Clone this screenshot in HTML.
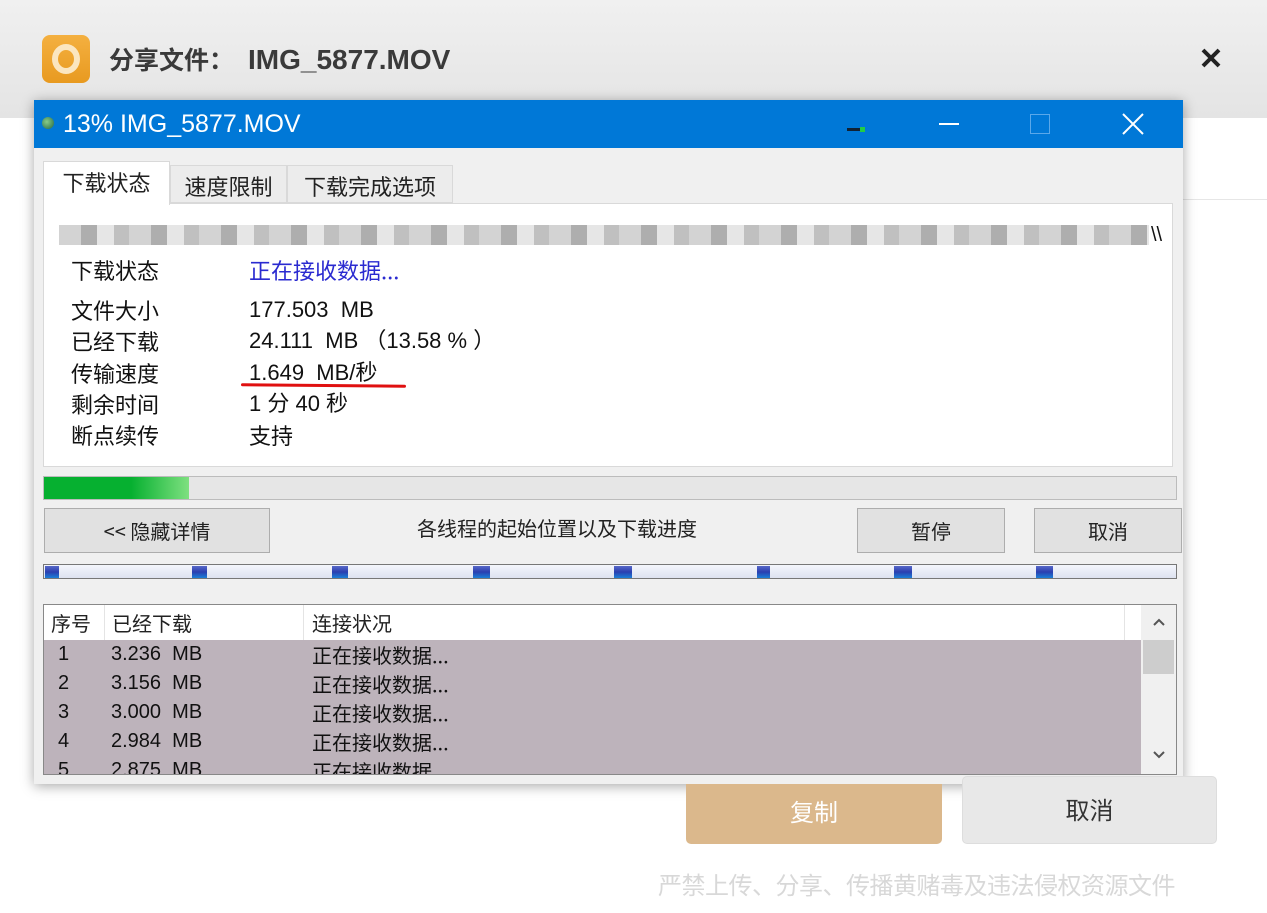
<!DOCTYPE html><html><head><meta charset="utf-8"><style>
*{margin:0;padding:0;box-sizing:border-box}
body{width:1267px;height:913px;background:#fff;position:relative;overflow:hidden;font-family:"Liberation Sans","Noto Sans CJK SC",sans-serif}
.a{position:absolute}
.cj{font-family:"Noto Sans CJK SC","WenQuanYi Zen Hei",sans-serif}
.row{position:absolute;font-size:22px;color:#111;line-height:24px}
.btn{position:absolute;background:#e1e1e1;border:1px solid #adadad;font-size:20px;color:#222;text-align:center}
.mk{position:absolute;top:1px;height:12px;width:16px;background:linear-gradient(#5868c8,#2a3fb0 50%,#1a7fd8)}
.lr{position:absolute;left:0;height:29px;width:1097px;font-size:20px;color:#111;line-height:29px}
</style></head><body>
<div class="a" style="left:0;top:0;width:1267px;height:118px;background:linear-gradient(#f0f0f0,#e4e4e4)"></div>
<div class="a" style="left:1183px;top:199px;width:84px;height:1px;background:#e6e6e6"></div>
<div class="a" style="left:42px;top:35px;width:48px;height:48px;border-radius:8px;background:linear-gradient(#f4b040,#e89a20)"></div>
<div class="a" style="left:52px;top:44px;width:28px;height:30px;border-radius:50%;border:6px solid #fbe6c0"></div>
<div class="a cj" style="left:109px;top:42px;font-size:25px;font-weight:bold;color:#3a3a3a;line-height:34px">分享文件：<span style="margin-left:14px;font-family:'Liberation Sans';font-size:28px">IMG_5877.MOV</span></div>
<svg class="a" style="left:1200px;top:47px" width="22" height="22"><path d="M3 3L19 19M19 3L3 19" stroke="#222" stroke-width="4"/></svg>

<div class="a" style="left:34px;top:100px;width:1149px;height:684px;background:#f0f0f0;box-shadow:0 2px 12px rgba(0,0,0,.35)">
 <div class="a" style="left:0;top:0;width:1149px;height:48px;background:#0078d7"></div>
 <div class="a" style="left:8px;top:17px;width:12px;height:12px;border-radius:50%;background:radial-gradient(circle at 40% 40%,#8c8,#264)"></div>
 <div class="a" style="left:29px;top:9px;font-size:25px;color:#fff;line-height:30px">13% IMG_5877.MOV</div>
 <div class="a" style="left:813px;top:28px;width:16px;height:3px;background:#123"></div><div class="a" style="left:826px;top:27px;width:5px;height:5px;background:#2c4"></div>
 <div class="a" style="left:905px;top:23px;width:20px;height:2px;background:#fff"></div>
 <div class="a" style="left:996px;top:14px;width:20px;height:20px;border:1px solid #5aa8ea"></div>
 <svg class="a" style="left:1088px;top:13px" width="22" height="22"><path d="M1 1L21 21M21 1L1 21" stroke="#fff" stroke-width="2"/></svg>

 <div class="a cj" style="left:136px;top:65px;width:117px;height:38px;border:1px solid #d9d9d9;background:#ececec;font-size:22px;line-height:40px;text-align:center;color:#222">速度限制</div>
 <div class="a cj" style="left:253px;top:65px;width:166px;height:38px;border:1px solid #d9d9d9;background:#ececec;font-size:22px;line-height:40px;text-align:center;color:#222">下载完成选项</div>
 <div class="a" style="left:9px;top:103px;width:1130px;height:264px;background:#fff;border:1px solid #d9d9d9"></div>
 <div class="a cj" style="left:9px;top:61px;width:127px;height:44px;border:1px solid #d9d9d9;border-bottom:none;background:#fff;font-size:22px;line-height:40px;text-align:center;color:#222">下载状态</div>
 <div class="a" style="left:25px;top:125px;width:1090px;height:20px;background:repeating-linear-gradient(90deg,#c8c8c8 0 22px,#9a9a9a 22px 38px,#e0e0e0 38px 55px,#b0b0b0 55px 70px);opacity:.8"></div>
 <div class="a" style="left:1117px;top:124px;font-size:20px;color:#111">\\</div>
 <div class="row cj" style="left:37px;top:158px">下载状态</div><div class="row cj" style="left:215px;top:158px;color:#2a2ad0">正在接收数据...</div>
 <div class="row cj" style="left:37px;top:198px">文件大小</div><div class="row" style="left:215px;top:198px">177.503&nbsp; MB</div>
 <div class="row cj" style="left:37px;top:229px">已经下载</div><div class="row" style="left:215px;top:229px">24.111&nbsp; MB （13.58 % ）</div>
 <div class="row cj" style="left:37px;top:261px">传输速度</div><div class="row" style="left:215px;top:261px">1.649&nbsp; MB/秒</div>
 <div class="a" style="left:207px;top:284px;width:165px;height:3px;border-radius:2px;background:#e01010;transform:rotate(0.5deg)"></div>
 <div class="row cj" style="left:37px;top:292px">剩余时间</div><div class="row" style="left:215px;top:292px">1 分 40 秒</div>
 <div class="row cj" style="left:37px;top:323px">断点续传</div><div class="row cj" style="left:215px;top:323px">支持</div>

 <div class="a" style="left:9px;top:376px;width:1134px;height:24px;background:#e6e6e6;border:1px solid #bcbcbc"></div>
 <div class="a" style="left:10px;top:377px;width:145px;height:22px;background:linear-gradient(90deg,#06b030 60%,#7ee080)"></div>

 <div class="btn cj" style="left:10px;top:408px;width:226px;height:45px;line-height:43px">&lt;&lt; 隐藏详情</div>
 <div class="a cj" style="left:383px;top:413px;font-size:20px;color:#222">各线程的起始位置以及下载进度</div>
 <div class="btn cj" style="left:823px;top:408px;width:148px;height:45px;line-height:43px">暂停</div>
 <div class="btn cj" style="left:1000px;top:408px;width:148px;height:45px;line-height:43px">取消</div>

 <div class="a" style="left:9px;top:464px;width:1134px;height:15px;background:linear-gradient(#f4f6fc,#dde2f0);border:1px solid #777">
  <div class="mk" style="left:1px;width:14px"></div><div class="mk" style="left:148px;width:15px"></div><div class="mk" style="left:288px"></div><div class="mk" style="left:429px;width:17px"></div><div class="mk" style="left:570px;width:18px"></div><div class="mk" style="left:713px;width:13px"></div><div class="mk" style="left:850px;width:18px"></div><div class="mk" style="left:992px;width:17px"></div>
 </div>

 <div class="a" style="left:9px;top:504px;width:1134px;height:171px;background:#fff;border:1px solid #888;overflow:hidden">
  <div class="a cj" style="left:0;top:0;width:1097px;height:35px;font-size:20px;color:#222;line-height:36px">
   <span class="a" style="left:7px">序号</span><span class="a" style="left:60px;top:0;height:35px;border-left:1px solid #e4e4e4"></span>
   <span class="a" style="left:68px">已经下载</span><span class="a" style="left:259px;top:0;height:35px;border-left:1px solid #e4e4e4"></span>
   <span class="a" style="left:268px">连接状况</span><span class="a" style="left:1080px;top:0;height:35px;border-left:1px solid #e4e4e4"></span>
  </div>
  <div class="a" style="left:0;top:35px;width:1097px;height:136px;background:#bdb3bb"></div>
  <div class="lr" style="top:35px"><span class="a" style="left:14px">1</span><span class="a" style="left:67px">3.236&nbsp; MB</span><span class="a cj" style="left:268px">正在接收数据...</span></div>
  <div class="lr" style="top:64px"><span class="a" style="left:14px">2</span><span class="a" style="left:67px">3.156&nbsp; MB</span><span class="a cj" style="left:268px">正在接收数据...</span></div>
  <div class="lr" style="top:93px"><span class="a" style="left:14px">3</span><span class="a" style="left:67px">3.000&nbsp; MB</span><span class="a cj" style="left:268px">正在接收数据...</span></div>
  <div class="lr" style="top:122px"><span class="a" style="left:14px">4</span><span class="a" style="left:67px">2.984&nbsp; MB</span><span class="a cj" style="left:268px">正在接收数据...</span></div>
  <div class="lr" style="top:151px"><span class="a" style="left:14px">5</span><span class="a" style="left:67px">2.875&nbsp; MB</span><span class="a cj" style="left:268px">正在接收数据...</span></div>
  <div class="a" style="left:1097px;top:0;width:36px;height:171px;background:#f0f0f0"></div>
  <div class="a" style="left:1099px;top:35px;width:31px;height:34px;background:#cdcdcd"></div>
  <svg class="a" style="left:1108px;top:12px" width="14" height="10"><path d="M2 8L7 3L12 8" stroke="#555" stroke-width="2" fill="none"/></svg>
  <svg class="a" style="left:1108px;top:145px" width="14" height="10"><path d="M2 2L7 7L12 2" stroke="#555" stroke-width="2" fill="none"/></svg>
 </div>
</div>

<div class="a cj" style="left:686px;top:784px;width:256px;height:60px;background:#dbb88c;border-radius:0 0 5px 5px;color:#fff;font-size:24px;text-align:center;line-height:54px">复制</div>
<div class="a cj" style="left:962px;top:776px;width:255px;height:68px;background:#e8e8e8;border:1px solid #ddd;border-radius:5px;color:#333;font-size:24px;text-align:center;line-height:64px">取消</div>
<div class="a cj" style="left:658px;top:866px;font-size:24px;letter-spacing:-0.5px;color:#d8d8d8">严禁上传、分享、传播黄赌毒及违法侵权资源文件</div>
</body></html>
